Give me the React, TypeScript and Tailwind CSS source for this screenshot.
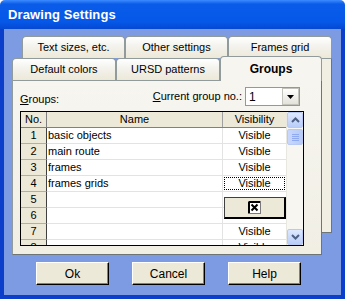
const rows = [
  { no: "1", name: "basic objects", vis: "Visible" },
  { no: "2", name: "main route", vis: "Visible" },
  { no: "3", name: "frames", vis: "Visible" },
  { no: "4", name: "frames grids", vis: "Visible", focus: true },
  { no: "5", name: "", vis: "" },
  { no: "6", name: "", vis: "" },
  { no: "7", name: "", vis: "Visible" },
  { no: "8", name: "", vis: "Visible" },
];

const tabBase =
  "h-[22px] flex items-center justify-center border border-b-0 border-[#919b9c] rounded-t-[4px] bg-[linear-gradient(180deg,#ffffff_0%,#f4f3ee_40%,#ece9d8_100%)] text-black";

const Chevron = ({ up }: { up?: boolean }) => (
  <svg width="9" height="6" viewBox="0 0 9 6">
    <path d={up ? "M1 5 L4.5 1.5 L8 5" : "M1 1 L4.5 4.5 L8 1"} fill="none" stroke="#4d6185" strokeWidth="2" />
  </svg>
);

const DialogButton = ({ label }: { label: string }) => (
  <button className="w-[73px] h-[23px] bg-[#ece9d8] border border-t-white border-l-white border-r-black border-b-black shadow-[inset_-1px_-1px_0_#808080] text-[12px] text-black">
    {label}
  </button>
);

export default function App() {
  return (
    <div className="w-[345px] h-[299px] flex flex-col font-['Liberation_Sans',Arial,sans-serif] text-[11px] text-black overflow-hidden">
      <div className="h-[29px] shrink-0 flex items-center pl-[8px] bg-[linear-gradient(180deg,#3d8bff_0%,#0a5ce8_14%,#0558e8_75%,#0648d2_100%)] rounded-t-[5px]">
        <span className="text-white font-bold text-[13px] tracking-[0.1px]">Drawing Settings</span>
      </div>

      <div className="flex-1 bg-[#7c9be2] border-x-[4px] border-b-[4px] border-[#0b3fcb] pt-[7px] pl-[8px]">
        <div className="w-[320px]">
          {/* back row of tabs */}
          <div className="flex pl-[10px]">
            <div className={`${tabBase} w-[103px]`}>Text sizes, etc.</div>
            <div className={`${tabBase} w-[103px]`}>Other settings</div>
            <div className={`${tabBase} w-[104px]`}>Frames grid</div>
          </div>

          <div className="flex">
            <div className="w-[310px]">
              {/* front row of tabs */}
              <div className="flex h-[22px] items-end">
                <div className={`${tabBase} w-[104px]`}>Default colors</div>
                <div className={`${tabBase} w-[104px]`}>URSD patterns</div>
                <div className="relative z-10 w-[102px] h-[25px] -mb-[1px] flex items-center justify-center border border-b-0 border-[#919b9c] rounded-t-[4px] bg-[#f6f5f0] font-bold text-[12px]">
                  Groups
                </div>
              </div>

              {/* tab page */}
              <div className="h-[175px] border border-[#919b9c] border-r-[#6e7576] border-b-[#6e7576] bg-[linear-gradient(180deg,#f6f5f0_0%,#f1efe4_100%)]">
                <div className="ml-[7px] w-[284px]">
                  <div className="flex items-end justify-between pt-[6px] pr-[4px] h-[25px]">
                    <span className="mb-[-1px]">
                      <span className="underline">G</span>roups:
                    </span>
                    <div className="flex items-center gap-[3px]">
                      <span>
                        <span className="underline">C</span>urrent group no.:
                      </span>
                      <div className="w-[55px] h-[19px] bg-white border border-[#7f9db9] flex items-center">
                        <span className="flex-1 pl-[3px] text-[12px]">1</span>
                        <div className="w-[17px] h-[17px] bg-[linear-gradient(180deg,#ffffff,#e3e2da)] border border-[#c3c3bc] flex items-center justify-center">
                          <svg width="7" height="4" viewBox="0 0 7 4">
                            <path d="M0 0 H7 L3.5 4 Z" fill="#000" />
                          </svg>
                        </div>
                      </div>
                    </div>
                  </div>

                  {/* grid */}
                  <div className="mt-[5px] h-[135px] border border-black flex bg-white overflow-hidden">
                    <div className="relative w-[265px]">
                      <div className="flex h-[16px] bg-[#ece9d8] border-b border-[#808080]">
                        <div className="w-[26px] border-r border-[#808080] flex items-center justify-center">No.</div>
                        <div className="w-[176px] border-r border-[#a0a0a0] flex items-center justify-center">Name</div>
                        <div className="w-[63px] flex items-center justify-center">Visibility</div>
                      </div>
                      {rows.map((r) => (
                        <div key={r.no} className="flex h-[16px] border-b border-[#e3e3e3]">
                          <div className="w-[26px] -mb-[1px] bg-[#ece9d8] border-r border-b border-r-[#404040] border-b-[#b0b0a8] flex items-center justify-center">
                            {r.no}
                          </div>
                          <div className="w-[176px] border-r border-[#e3e3e3] pl-[1px] flex items-center">{r.name}</div>
                          <div className="w-[63px] p-[1px] flex">
                            <div
                              className={`flex-1 flex items-center justify-center ${
                                r.focus ? "border border-dotted border-black" : ""
                              }`}
                            >
                              {r.vis}
                            </div>
                          </div>
                        </div>
                      ))}
                      {/* in-place editor */}
                      <div className="absolute left-[203px] top-[85px] w-[62px] h-[22px] bg-[#ece9d8] border border-[#404040] border-r-2 border-b-2 border-r-black border-b-black flex items-center justify-center">
                        <svg width="13" height="13" viewBox="0 0 13 13">
                          <rect x="0.5" y="0.5" width="12" height="12" fill="#fff" stroke="#7a7a7a" />
                          <path d="M1 1 V12 M1 1 H12" stroke="#000" strokeWidth="2" />
                          <path d="M3.5 3.5 L9.5 9.5 M9.5 3.5 L3.5 9.5" stroke="#000" strokeWidth="2" />
                        </svg>
                      </div>
                    </div>

                    {/* scrollbar */}
                    <div className="w-[17px] flex flex-col bg-[#f7f6f1] border-l border-[#e8e8e0]">
                      <div className="h-[16px] rounded-[2px] border border-[#b7c9f4] bg-[linear-gradient(180deg,#dfe8fe,#b8cdf8)] flex items-center justify-center">
                        <Chevron up />
                      </div>
                      <div className="h-[16px] mt-[1px] rounded-[2px] border border-[#b7c9f4] bg-[linear-gradient(90deg,#c9d8fc,#b6cbf6)] flex flex-col items-center justify-center gap-[1px]">
                        <div className="w-[7px] h-[1px] bg-[#8faaf0]" />
                        <div className="w-[7px] h-[1px] bg-[#8faaf0]" />
                        <div className="w-[7px] h-[1px] bg-[#8faaf0]" />
                        <div className="w-[7px] h-[1px] bg-[#8faaf0]" />
                      </div>
                      <div className="flex-1" />
                      <div className="h-[16px] rounded-[2px] border border-[#b7c9f4] bg-[linear-gradient(180deg,#dfe8fe,#b8cdf8)] flex items-center justify-center">
                        <Chevron />
                      </div>
                    </div>
                  </div>
                </div>
              </div>
            </div>

            {/* edge of the tab pages behind */}
            <div className="w-[10px] h-[175px] bg-[#f1efe4] border-r border-b border-[#6e7576] border-t border-t-[#919b9c]" />
          </div>
        </div>

        <div className="flex gap-[23px] ml-[24px] mt-[7px]">
          <DialogButton label="Ok" />
          <DialogButton label="Cancel" />
          <DialogButton label="Help" />
        </div>
      </div>
    </div>
  );
}
